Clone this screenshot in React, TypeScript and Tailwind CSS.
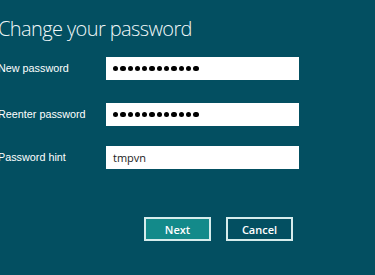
import React from 'react';

const Dots: React.FC<{ count: number }> = ({ count }) => (
  <div className="flex items-center gap-[2px]">
    {Array.from({ length: count }).map((_, i) => (
      <span key={i} className="block w-[5.3px] h-[5.3px] rounded-full bg-black" />
    ))}
  </div>
);

const Row: React.FC<{ label: string; children: React.ReactNode; className?: string }> = ({ label, children, className }) => (
  <div className={`flex items-center ${className ?? ''}`}>
    <div
      className="w-[106px] ml-[-2px] text-[10.8px] text-white leading-none"
      style={{ fontFamily: '"Liberation Sans", Arial, sans-serif' }}
    >
      {label}
    </div>
    <div className="w-[193px] h-[23px] ml-[2px] bg-white flex items-center pl-[7px]">{children}</div>
  </div>
);

const App: React.FC = () => {
  return (
    <div
      className="w-[375px] h-[275px] bg-[#034f61] overflow-hidden relative"
      style={{ fontFamily: '"Open Sans", "Noto Sans", sans-serif' }}
    >
      <h1 className="ml-[-2px] pt-[16px] text-[20px] font-light text-[#f2f8f9] leading-[25px] tracking-[-0.6px]">
        Change your password
      </h1>

      {/* Form */}
      <div className="mt-[16px] flex flex-col">
        <Row label="New password">
          <Dots count={12} />
        </Row>
        <Row label="Reenter password" className="mt-[23px]">
          <Dots count={12} />
        </Row>
        <Row label="Password hint" className="mt-[20px]">
          <span className="text-[11px] text-[#222] leading-none">tmpvn</span>
        </Row>
      </div>

      {/* Buttons */}
      <div className="mt-[48px] ml-[144px] flex gap-[15px]">
        <button className="w-[67px] h-[24px] bg-[#138a8a] border-2 border-[#d6ecec] text-white text-[11px] font-semibold leading-none">
          Next
        </button>
        <button className="w-[67px] h-[24px] bg-transparent border-2 border-[#d6ecec] text-white text-[11px] font-semibold leading-none">
          Cancel
        </button>
      </div>
    </div>
  );
};

export default App;
